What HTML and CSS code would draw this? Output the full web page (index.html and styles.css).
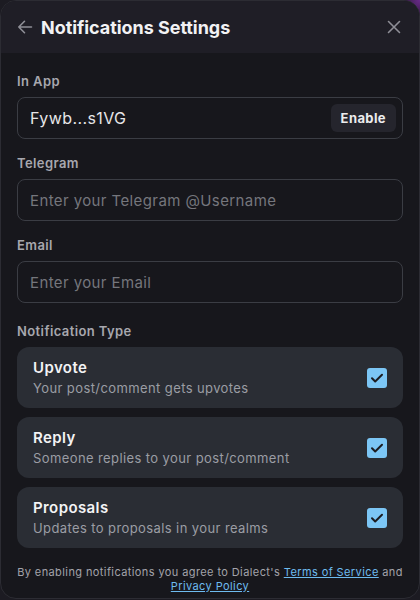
FILE: index.html
```html
<!DOCTYPE html>
<html>
<head>
<meta charset="utf-8">
<link rel="stylesheet" href="styles.css">
</head>
<body>
<div class="panel">
  <header class="head">
    <svg class="back" width="16" height="16" viewBox="0 0 16 16" fill="none" stroke="#8e8e96" stroke-width="1.6" stroke-linecap="round" stroke-linejoin="round"><path d="M14.5 8H1.8M7.5 2.3L1.8 8l5.7 5.7"/></svg>
    <h1 class="title">Notifications Settings</h1>
    <svg class="close" width="14" height="14" viewBox="0 0 14 14" fill="none" stroke="#8e8e96" stroke-width="1.6" stroke-linecap="round"><path d="M1.5 1.5l11 11M12.5 1.5l-11 11"/></svg>
  </header>
  <main class="body">
    <section class="field">
      <div class="label">In App</div>
      <div class="input">
        <span class="value">Fywb...s1VG</span>
        <button class="enable">Enable</button>
      </div>
    </section>
    <section class="field">
      <div class="label">Telegram</div>
      <div class="input"><span class="ph">Enter your Telegram @Username</span></div>
    </section>
    <section class="field">
      <div class="label">Email</div>
      <div class="input"><span class="ph">Enter your Email</span></div>
    </section>
    <section class="types">
      <div class="label">Notification Type</div>
      <div class="card">
        <div class="ctext"><div class="ctitle">Upvote</div><div class="csub">Your post/comment gets upvotes</div></div>
        <span class="check"><svg width="14" height="14" viewBox="0 0 14 14" fill="none" stroke="#1c1d22" stroke-width="2" stroke-linecap="round" stroke-linejoin="round"><path d="M2 7.3l3.2 3.2L12 3.8"/></svg></span>
      </div>
      <div class="card">
        <div class="ctext"><div class="ctitle">Reply</div><div class="csub">Someone replies to your post/comment</div></div>
        <span class="check"><svg width="14" height="14" viewBox="0 0 14 14" fill="none" stroke="#1c1d22" stroke-width="2" stroke-linecap="round" stroke-linejoin="round"><path d="M2 7.3l3.2 3.2L12 3.8"/></svg></span>
      </div>
      <div class="card">
        <div class="ctext"><div class="ctitle">Proposals</div><div class="csub">Updates to proposals in your realms</div></div>
        <span class="check"><svg width="14" height="14" viewBox="0 0 14 14" fill="none" stroke="#1c1d22" stroke-width="2" stroke-linecap="round" stroke-linejoin="round"><path d="M2 7.3l3.2 3.2L12 3.8"/></svg></span>
      </div>
    </section>
    <p class="foot">By enabling notifications you agree to Dialect's <a href="#">Terms of Service</a> and <a href="#">Privacy Policy</a></p>
  </main>
</div>
</body>
</html>
```
FILE: styles.css
```css
* { box-sizing: border-box; }
html, body { margin: 0; padding: 0; }
body {
  width: 420px;
  height: 600px;
  background: radial-gradient(circle at 420px 0, #6a2a8a 0, #3a1f4a 14px, #1c1b22 30px);
  font-family: Inter, "Noto Sans", sans-serif;
  letter-spacing: 0.4px;
  overflow: hidden;
}
.panel {
  width: 420px;
  height: 599px;
  border: 1px solid #2c2c33;
  border-radius: 16px;
  background: #17171c;
  overflow: hidden;
  display: flex;
  flex-direction: column;
}
.head {
  height: 52px;
  background: #1f1e26;
  display: flex;
  align-items: center;
  padding: 0 18px 0 16px;
  flex-shrink: 0;
}
.back { flex-shrink: 0; margin-right: 8px; }
.title {
  margin: 0;
  flex: 1;
  font-size: 18px;
  font-weight: 700;
  color: #f2f2f4;
  letter-spacing: -0.05px;
}
.close { flex-shrink: 0; }
.body {
  padding: 20px 16px 0 16px;
  display: flex;
  flex-direction: column;
}
.field { display: flex; flex-direction: column; gap: 8px; margin-bottom: 16px; }
.label {
  font-size: 13px;
  line-height: 16px;
  font-weight: 600;
  color: #a7a7ae;
}
.input {
  height: 42px;
  border: 1px solid #3b3d44;
  border-radius: 8px;
  display: flex;
  align-items: center;
  padding: 0 6px 0 12px;
}
.value { flex: 1; font-size: 16px; color: #e6e6e8; }
.ph { font-size: 15px; color: #75767c; }
.enable {
  height: 28px;
  padding: 0 10px;
  border: 0;
  border-radius: 6px;
  background: #25252d;
  color: #ececee;
  font-family: inherit;
  font-size: 13px;
  font-weight: 700;
  letter-spacing: 0.4px;
}
.types { display: flex; flex-direction: column; gap: 9px; margin-top: 4px; }
.types .label { margin-bottom: -1px; }
.card {
  height: 61px;
  background: #2a2d34;
  border-radius: 12px;
  display: flex;
  align-items: center;
  padding: 0 16px;
}
.ctext { flex: 1; }
.ctitle { font-size: 15px; font-weight: 600; color: #f3f3f5; line-height: 20px; }
.csub { font-size: 13px; color: #9b9da4; line-height: 18px; margin-top: 1px; }
.check {
  width: 20px;
  height: 20px;
  border-radius: 3px;
  background: #7cc6f5;
  display: flex;
  align-items: center;
  justify-content: center;
}
.foot {
  margin: 17px 0 0;
  text-align: center;
  font-size: 11px;
  line-height: 14px;
  color: #a3a3aa;
  letter-spacing: 0.4px;
}
.foot a { color: #6ebbef; text-decoration: underline; }
```
